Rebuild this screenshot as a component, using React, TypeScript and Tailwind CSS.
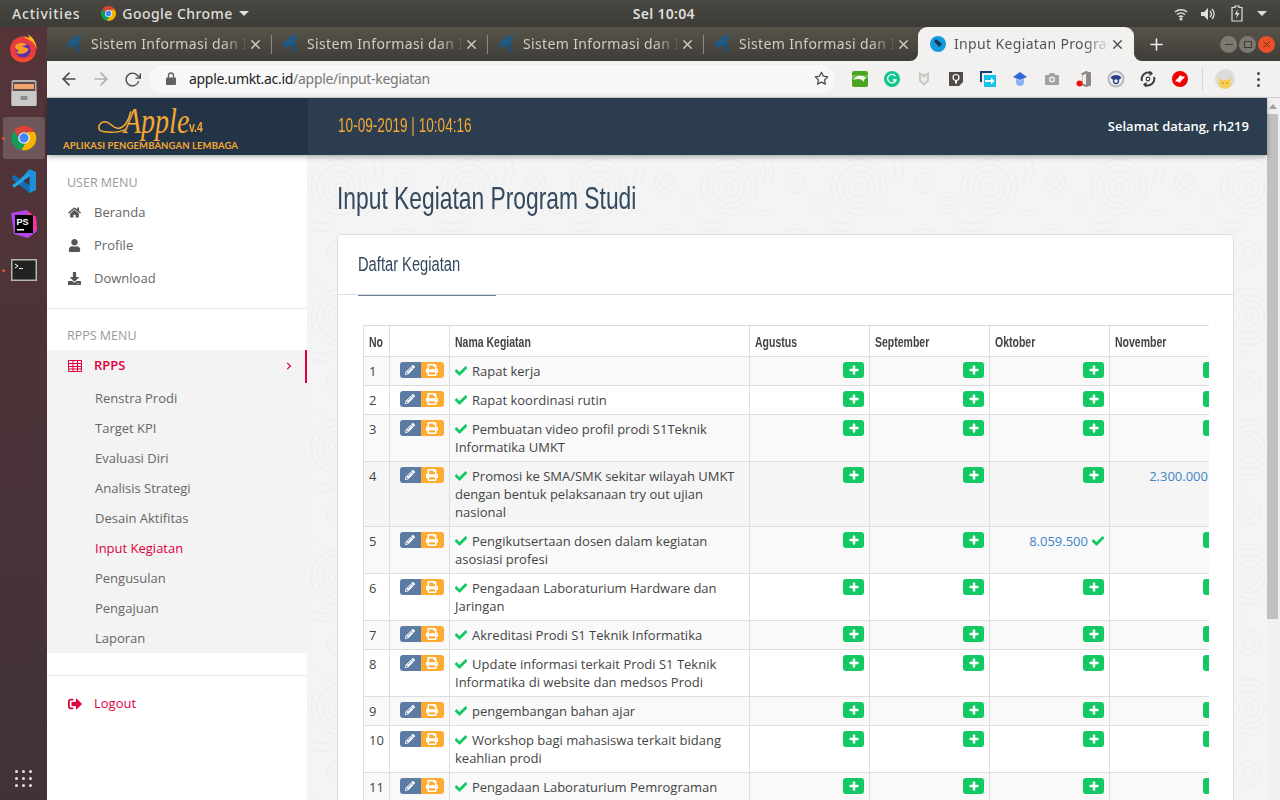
import {
  FaCheck,
  FaChevronRight,
  FaDownload,
  FaHome,
  FaPencilAlt,
  FaPlus,
  FaPrint,
  FaSignOutAlt,
  FaUser,
} from "react-icons/fa";
import { FiArrowLeft, FiArrowRight, FiRotateCw, FiStar, FiX, FiPlus } from "react-icons/fi";

const openSans = "font-['Open_Sans',sans-serif]";
const narrow = "inline-block origin-left whitespace-nowrap font-['Liberation_Sans',sans-serif]";

function ChromeLogo({ size = 24 }: { size?: number }) {
  return (
    <svg width={size} height={size} viewBox="0 0 48 48">
      <path d="M24 3a21 21 0 0 1 18.2 10.5H24a10.500 10.500 0 0 0-10 7.200L6.800 11.500A21 21 0 0 1 24 3z" fill="#db4437" />
      <path d="M6.800 11.500 15.900 27.300a10.500 10.500 0 0 0 10.700 6.900L19.700 44.600A21 21 0 0 1 6.800 11.500z" fill="#0f9d58" />
      <path d="M42.200 13.500A21 21 0 0 1 19.700 44.600l9-15.600a10.500 10.500 0 0 0-.200-15.500z" fill="#f4b400" />
      <circle cx="24" cy="24" r="10" fill="#fff" />
      <circle cx="24" cy="24" r="8" fill="#4285f4" />
    </svg>
  );
}

function CapIcon() {
  return (
    <svg width="18" height="18" viewBox="0 0 18 18" className="shrink-0">
      <path d="M0 10 9 1h7l-3 5v4l-4 2-2-2-4 3z" fill="#1e5a85" />
      <text x="8" y="17" fontSize="11" fontWeight="700" fill="#174e78" fontFamily="Liberation Sans, sans-serif">
        S
      </text>
    </svg>
  );
}

function Tab({ last }: { last?: boolean }) {
  return (
    <div className="relative flex h-full w-[216px] shrink-0 items-center pl-[10px] pr-[7px]">
      <CapIcon />
      <span className="ml-[7px] w-[157px] shrink-0 overflow-hidden whitespace-nowrap pb-[2px] text-[14px] tracking-[0.35px] text-[#cfcdc7] font-['Noto_Sans',sans-serif] [mask-image:linear-gradient(to_right,black_84%,transparent)]">
        Sistem Informasi dan I
      </span>
      <FiX className="ml-auto mr-[2px] text-[15px] text-[#d8d6d0]" />
      {!last && <span className="absolute right-0 top-[8px] h-[19px] w-px bg-[#8c8a83]" />}
    </div>
  );
}

function Extensions() {
  return (
    <div className="flex items-center">
      {/* dolphin */}
      <div className="flex w-8 justify-center">
        <svg width="16" height="16" viewBox="0 0 16 16">
          <rect width="16" height="16" rx="2" fill="#4aa321" />
          <path d="M0 4h16v3C11 3 5 3 0 8z" fill="#7cc04f" />
          <path d="M1 9c3-5 8-6 14-2-2 0-3 1-3 4-2-3-6-4-11-2z" fill="#eef8e6" />
        </svg>
      </div>
      {/* grammarly */}
      <div className="flex w-8 justify-center">
        <svg width="16" height="16" viewBox="0 0 16 16">
          <circle cx="8" cy="8" r="8" fill="#11c58f" />
          <path d="M11.500 5.200A4.300 4.300 0 1 0 12 9H8.800" fill="none" stroke="#fff" strokeWidth="1.300" />
        </svg>
      </div>
      {/* shield */}
      <div className="flex w-8 justify-center">
        <svg width="16" height="16" viewBox="0 0 16 16">
          <path d="M3 1 8 3.500 13 1v9l-5 5-5-5z" fill="#c9c9c6" />
          <path d="M5 4 8 7l3-3v5l-3 3-3-3z" fill="#eeedec" />
        </svg>
      </div>
      {/* bulb note */}
      <div className="flex w-8 justify-center">
        <svg width="16" height="16" viewBox="0 0 16 16">
          <path d="M1 1h14v10l-4 4H1z" fill="#4f4c4a" />
          <circle cx="8" cy="6.500" r="3" fill="none" stroke="#fff" strokeWidth="1.200" />
          <path d="M7 10h2v2.500H7z" fill="#fff" />
        </svg>
      </div>
      {/* share */}
      <div className="flex w-8 justify-center">
        <svg width="16" height="16" viewBox="0 0 16 16">
          <path d="M0 0h12v2H2v9H0z" fill="#123f6b" />
          <rect x="4" y="4" width="12" height="12" fill="#12c4ea" />
          <path d="M5 9h6V6.500l3.500 3.500-3.500 3.500V11H5z" fill="#fff" />
        </svg>
      </div>
      {/* cap */}
      <div className="flex w-8 justify-center">
        <svg width="16" height="16" viewBox="0 0 16 16">
          <path d="M8 1 15 6 8 9 1 6z" fill="#3468d6" />
          <path d="M4 8l4 1.500L12 8v3a4 4 0 0 1-8 0z" fill="#8ab0f3" />
        </svg>
      </div>
      {/* camera */}
      <div className="flex w-8 justify-center">
        <svg width="16" height="16" viewBox="0 0 16 16">
          <path d="M1 4h3.500L6 2h4l1.500 2H15v10H1z" fill="#a3a19f" />
          <circle cx="8" cy="8.500" r="3" fill="#f2f1f0" />
          <circle cx="8" cy="8.500" r="1.600" fill="#a3a19f" />
        </svg>
      </div>
      {/* office */}
      <div className="flex w-8 justify-center">
        <svg width="16" height="16" viewBox="0 0 16 16">
          <path d="M4 3 10 0l5 1.500v13L10 16l-4-1.500V3z" fill="#8b8886" />
          <path d="M6.500 4.500 10 2.500v11l-3.500-.5z" fill="#f2f1f0" />
          <circle cx="3.500" cy="12.500" r="3" fill="#ee0f0f" />
        </svg>
      </div>
      {/* phone */}
      <div className="flex w-8 justify-center">
        <svg width="18" height="18" viewBox="0 0 18 18">
          <circle cx="9" cy="9" r="8.500" fill="#b7b7bc" />
          <circle cx="9" cy="9" r="6.500" fill="#f0f0f4" />
          <path d="M3.500 8C5 4 13 4 14.500 8l-2 1.500H11V8H7v1.500H5.500z" fill="#2b3f86" />
          <circle cx="9" cy="11" r="2.500" fill="none" stroke="#2b3f86" strokeWidth="1.300" />
        </svg>
      </div>
      {/* sync */}
      <div className="flex w-8 justify-center">
        <svg width="16" height="16" viewBox="0 0 16 16" fill="none" stroke="#3b3b3b" strokeWidth="2">
          <path d="M2 10A6.500 6.500 0 0 1 11 2.200" />
          <path d="M14 6A6.500 6.500 0 0 1 5 13.800" />
          <path d="M9.500 0l3 2.500-3 2" fill="#3b3b3b" strokeWidth="1" />
          <path d="M6.500 16l-3-2.500 3-2" fill="#3b3b3b" strokeWidth="1" />
          <circle cx="8" cy="8" r="1.800" strokeWidth="1.200" />
        </svg>
      </div>
      {/* red sync */}
      <div className="flex w-8 justify-center">
        <svg width="16" height="16" viewBox="0 0 16 16">
          <circle cx="8" cy="8" r="8" fill="#ee0000" />
          <path d="M4 9.500 8.500 4 10 5.500 6 10.500zM12 6.500 7.500 12 6 10.500l4-5z" fill="#fff" />
          <path d="M3.500 11 4 8l2.500 2zM12.500 5 12 8 9.500 6z" fill="#fff" />
        </svg>
      </div>
      <span className="ml-[6px] h-[24px] w-px bg-[#d6d5d3]" />
      <div className="ml-[12px] flex h-[20px] w-[20px] items-end justify-center overflow-hidden rounded-full bg-[#dcdcdc]">
        <svg width="14" height="14" viewBox="0 0 14 14">
          <path d="M1 2l3 3h6l3-3v7a6 5 0 0 1-12 0z" fill="#f6cd55" />
          <circle cx="5" cy="8" r="0.700" fill="#a07a20" />
          <circle cx="9" cy="8" r="0.700" fill="#a07a20" />
        </svg>
      </div>
      <div className="ml-[22px] flex flex-col gap-[3px]">
        <span className="h-[3px] w-[3px] rounded-full bg-[#4a4a4a]" />
        <span className="h-[3px] w-[3px] rounded-full bg-[#4a4a4a]" />
        <span className="h-[3px] w-[3px] rounded-full bg-[#4a4a4a]" />
      </div>
    </div>
  );
}

function Dock() {
  return (
    <div className="flex h-full w-[47px] shrink-0 flex-col items-center bg-gradient-to-b from-[#553438] to-[#403238]">
      {/* firefox */}
      <div className="flex h-[42px] items-center justify-center pr-px">
        <svg width="28" height="29" viewBox="0 0 28 29">
          <circle cx="14" cy="15.500" r="13" fill="#e83a3f" />
          <path d="M18 0c6 3 10 9 9.500 16-.5-5-3-9-7-10.500C21 3.500 20 1.500 18 0z" fill="#ffcb2e" />
          <path d="M14 2.500a13 13 0 0 1 13.500 13c-1-5-4-8-7.500-9.500z" fill="#ffa51f" />
          <circle cx="14" cy="16" r="7.500" fill="#5a2fa8" />
          <path d="M6 12c3-4 10-4 12-1-2 0-3 1-5 1.500 2 1 6 1 6.500 3-2 5-10 6-13.500 1.500 1 .500 3 1 4 0-2-1-4-3-4-5z" fill="#fd9a26" />
          <path d="M2 20c3 7 13 10 20 5 3-2 4-5 5-8-2 6-8 8-13 8-5 0-9-2-12-5z" fill="#f8542a" />
        </svg>
      </div>
      {/* files */}
      <div className="flex h-[48px] items-center justify-center">
        <svg width="26" height="28" viewBox="0 0 26 28">
          <rect x="0.500" y="1" width="25" height="26" rx="2" fill="#b4b4b2" />
          <rect x="2" y="3" width="22" height="9" fill="#5e4a42" />
          <rect x="3" y="5" width="20" height="5" fill="#f0a36b" />
          <rect x="0.500" y="12" width="25" height="15" rx="1" fill="#c9c9c7" />
          <rect x="9.500" y="17" width="7" height="4" rx="1" fill="#8b8b89" />
        </svg>
      </div>
      {/* chrome, active */}
      <div className="relative flex h-[42px] w-[42px] items-center justify-center rounded-[3px] bg-[#6e575a]">
        <span className="absolute left-[-1px] top-[20px] h-[3px] w-[3px] rounded-full bg-[#e95420]" />
        <ChromeLogo size={28} />
      </div>
      {/* vs code */}
      <div className="mt-px flex h-[42px] items-center justify-center">
        <svg width="26" height="26" viewBox="0 0 26 26">
          <path d="M18.500 1 25 4v18l-6.500 3L6.500 14z" fill="#1d8fd6" />
          <path d="M1 8.500 3.500 7l15 11v7L1 11z" fill="#0f6fb0" />
          <path d="M1 17.500l17.500-13v4.500L3.500 19.500z" fill="#2aa3ea" />
          <path d="M18.500 8.500v9L12 13z" fill="#403238" />
        </svg>
      </div>
      {/* phpstorm */}
      <div className="mt-px flex h-[42px] items-center justify-center">
        <svg width="29" height="29" viewBox="0 0 29 29">
          <path d="M2 3 17 0l10 7 1 14-9 7-14-4z" fill="#b345f1" />
          <path d="M17 0l10 7 1 14-5-1z" fill="#ff318c" opacity="0.800" />
          <rect x="6" y="5" width="18" height="18" fill="#000" />
          <text x="7.500" y="14.500" fontSize="9" fontWeight="700" fill="#fff" fontFamily="Liberation Sans, sans-serif">
            PS
          </text>
          <rect x="8" y="19" width="7" height="1.500" fill="#fff" />
        </svg>
      </div>
      {/* terminal */}
      <div className="relative mt-[4px] flex h-[42px] w-full items-center justify-center">
        <span className="absolute left-[2px] top-[20px] h-[3px] w-[3px] rounded-full bg-[#e95420]" />
        <svg width="26" height="22" viewBox="0 0 26 22">
          <rect width="26" height="22" fill="#b5b5b3" />
          <rect x="1.500" y="1.500" width="23" height="19" fill="#222" />
          <path d="M4 5l3 2-3 2" fill="none" stroke="#fff" strokeWidth="1" />
          <rect x="8" y="9" width="4" height="1" fill="#fff" />
        </svg>
      </div>
      <div className="mb-[13px] mt-auto grid grid-cols-3 gap-x-[4px] gap-y-[4px] pr-px">
        {Array.from({ length: 9 }).map((_, i) => (
          <span key={i} className="h-[3px] w-[3px] rounded-full bg-[#e8e4e4]" />
        ))}
      </div>
    </div>
  );
}

const subMenu = ["Renstra Prodi", "Target KPI", "Evaluasi Diri", "Analisis Strategi", "Desain Aktifitas", "Input Kegiatan", "Pengusulan", "Pengajuan", "Laporan"];

function Sidebar() {
  return (
    <aside className={`h-full w-[260px] shrink-0 bg-white text-[13px] text-[#666] ${openSans}`}>
      <div className="border-b border-[#e8e8e8] pb-[13px] pt-[19px]">
        <div className="mb-[4px] h-[18px] pl-[20px] text-[12.500px] leading-[18px] text-[#999]">USER MENU</div>
        {[
          { label: "Beranda", Icon: FaHome },
          { label: "Profile", Icon: FaUser },
          { label: "Download", Icon: FaDownload },
        ].map(({ label, Icon }) => (
          <div key={label} className="flex h-[33px] items-center pl-[21px]">
            <span className="flex w-[26px] text-[13px] text-[#555]">
              <Icon />
            </span>
            {label}
          </div>
        ))}
      </div>
      <div className="border-b border-[#e8e8e8] pb-[22px] pt-[18px]">
        <div className="mb-[5px] h-[18px] pl-[20px] text-[12.500px] leading-[18px] text-[#999]">RPPS MENU</div>
        <div className="flex h-[33px] items-center border-r-2 border-[#e0003c] bg-[#f3f3f3] pb-[2px] pl-[21px] font-semibold text-[#e0003c]">
          <svg width="14" height="12" viewBox="0 0 14 12" fill="none" stroke="#e0003c" className="mr-[12px]">
            <path d="M.5.500h13v11H.5zM.5 3.500h13M.5 6.500h13M.5 9h13M5 .500v11M9.500 .500v11" />
          </svg>
          RPPS
          <FaChevronRight className="ml-auto mr-[12px] text-[8px]" />
        </div>
        <div className="bg-[#f3f3f3]">
          {subMenu.map((item) => (
            <div key={item} className={`flex h-[30px] items-center pl-[48px] pt-[2px] ${item === "Input Kegiatan" ? "text-[#e0003c]" : ""}`}>
              {item}
            </div>
          ))}
        </div>
      </div>
      <div className="mt-[11px] flex h-[33px] items-center pl-[21px] text-[#e0003c]">
        <span className="flex w-[26px] text-[14px]">
          <FaSignOutAlt />
        </span>
        Logout
      </div>
    </aside>
  );
}

type Row = {
  no: number;
  name: string;
  values?: Record<number, { text: string }>;
};

const rows: Row[] = [
  { no: 1, name: "Rapat kerja" },
  { no: 2, name: "Rapat koordinasi rutin" },
  { no: 3, name: "Pembuatan video profil prodi S1Teknik Informatika UMKT" },
  { no: 4, name: "Promosi ke SMA/SMK sekitar wilayah UMKT dengan bentuk pelaksanaan try out ujian nasional", values: { 3: { text: "2.300.000" } } },
  { no: 5, name: "Pengikutsertaan dosen dalam kegiatan asosiasi profesi", values: { 2: { text: "8.059.500" } } },
  { no: 6, name: "Pengadaan Laboraturium Hardware dan Jaringan" },
  { no: 7, name: "Akreditasi Prodi S1 Teknik Informatika" },
  { no: 8, name: "Update informasi terkait Prodi S1 Teknik Informatika di website dan medsos Prodi" },
  { no: 9, name: "pengembangan bahan ajar" },
  { no: 10, name: "Workshop bagi mahasiswa terkait bidang keahlian prodi" },
  { no: 11, name: "Pengadaan Laboraturium Pemrograman" },
];

const months = ["Agustus", "September", "Oktober", "November"];

function HeadLabel({ children }: { children: string }) {
  return <span className={`${narrow} scale-x-[0.7]`}>{children}</span>;
}

function KegiatanTable() {
  const th = "h-[31px] border border-[#ddd] px-[5px] py-0 text-left text-[15px] font-bold leading-[19px] text-[#444]";
  const td = "border border-[#ddd] px-[5px] py-[5px] align-top";
  return (
    <div className="w-[846px] overflow-hidden">
      <table className={`w-[866px] table-fixed border-collapse text-[13px] leading-[18px] text-[#444] ${openSans}`}>
        <colgroup>
          <col className="w-[26px]" />
          <col className="w-[60px]" />
          <col className="w-[300px]" />
          <col className="w-[120px]" />
          <col className="w-[120px]" />
          <col className="w-[120px]" />
          <col className="w-[120px]" />
        </colgroup>
        <thead>
          <tr>
            <th className={th}>
              <HeadLabel>No</HeadLabel>
            </th>
            <th className={th}></th>
            <th className={th}>
              <HeadLabel>Nama Kegiatan</HeadLabel>
            </th>
            {months.map((m) => (
              <th key={m} className={th}>
                <HeadLabel>{m}</HeadLabel>
              </th>
            ))}
          </tr>
        </thead>
        <tbody>
          {rows.map((row) => (
            <tr key={row.no} className={row.no === 4 ? "bg-[#f5f5f5]" : row.no % 2 === 1 ? "bg-[#f9f9f9]" : "bg-white"}>
              <td className={td}>{row.no}</td>
              <td className={td}>
                <div className="flex justify-center pl-[4px]">
                  <span className="flex h-[16px] w-[21px] shrink-0 items-center justify-center rounded-l-[3px] bg-[#5b7ba5] text-[10px] text-white">
                    <FaPencilAlt />
                  </span>
                  <span className="flex h-[16px] w-[23px] shrink-0 items-center justify-center rounded-r-[3px] bg-[#fdab32] text-[12px] text-white">
                    <FaPrint />
                  </span>
                </div>
              </td>
              <td className={td}>
                <FaCheck className="mr-[5px] inline-block stroke-[30px] align-[-1px] text-[12px] text-[#13c964]" />
                {row.name}
              </td>
              {months.map((m, i) => {
                const value = row.values?.[i];
                return (
                  <td key={m} className={`${td} text-right`}>
                    {value ? (
                      <span className="flex items-center justify-end gap-[4px] whitespace-nowrap text-[#3f83c9]">
                        {value.text}
                        <FaCheck className="stroke-[30px] text-[12px] text-[#13c964]" />
                      </span>
                    ) : (
                      <span className="ml-auto flex h-[16px] w-[21px] items-center justify-center rounded-[3px] bg-[#13c964] text-[10px] text-white">
                        <FaPlus className="stroke-[30px]" />
                      </span>
                    )}
                  </td>
                );
              })}
            </tr>
          ))}
        </tbody>
      </table>
    </div>
  );
}

export default function App() {
  return (
    <div className="flex h-[800px] w-[1280px] flex-col overflow-hidden bg-[#403238]">
      {/* gnome top bar */}
      <div className="flex h-[27px] shrink-0 items-center bg-gradient-to-b from-[#4a4842] to-[#3c3b37] text-[14px] font-medium text-[#dfdfda] font-['Noto_Sans',sans-serif]">
        <span className="ml-[12px] tracking-[0.8px]">Activities</span>
        <span className="ml-[20px] flex">
          <ChromeLogo size={17} />
        </span>
        <span className="ml-[5px] tracking-[0.45px]">Google Chrome</span>
        <span className="ml-[6px] h-0 w-0 border-x-[5px] border-t-[5px] border-x-transparent border-t-[#dfdfda]" />
        <span className="ml-[384px] text-[14px] font-semibold tracking-[0.3px]">Sel 10:04</span>
        <div className="ml-auto mr-[13px] flex items-center gap-[13px]">
          <svg width="14" height="14" viewBox="0 0 14 14" fill="none" stroke="#dfdfda" strokeWidth="1.500">
            <path d="M1 5a9 9 0 0 1 12 0M3 7.500a6 6 0 0 1 8 0M5 10a3 3 0 0 1 4 0" />
            <circle cx="7" cy="12" r="0.800" fill="#dfdfda" />
          </svg>
          <svg width="15" height="14" viewBox="0 0 15 14" fill="#dfdfda">
            <path d="M0 5h3l4-4v12L3 9H0z" />
            <path d="M9 4a4 4 0 0 1 0 6M11 2a7 7 0 0 1 0 10" fill="none" stroke="#dfdfda" strokeWidth="1.300" />
          </svg>
          <svg width="12" height="17" viewBox="0 0 12 17" fill="none" stroke="#dfdfda" strokeWidth="1.200" className="ml-[2px]">
            <path d="M4 1h4v1.500h3V16H1V2.500h3z" />
            <path d="M7 4 3.500 9.500H6L5 14l3.500-6H6z" fill="#dfdfda" stroke="none" />
          </svg>
          <span className="ml-px h-0 w-0 border-x-[5px] border-t-[5px] border-x-transparent border-t-[#dfdfda]" />
        </div>
      </div>

      <div className="flex min-h-0 flex-1">
        <Dock />
        <div className="flex min-w-0 flex-1 flex-col">
          {/* tab strip */}
          <div className="flex h-[34px] shrink-0 items-end bg-gradient-to-b from-[#565449] to-[#3f3d38] pl-[9px]">
            <div className="flex h-[34px] items-center">
              <Tab />
              <Tab />
              <Tab />
              <Tab last />
            </div>
            <div className="relative -ml-[2px] flex h-[34px] w-[216px] shrink-0 items-center rounded-t-[9px] bg-[#f2f1f0] pl-[12px] pr-[7px]">
              <span className="absolute bottom-0 left-[-8px] h-[8px] w-[8px] bg-[#f2f1f0]">
                <span className="block h-full w-full rounded-br-[8px] bg-[#403e39]" />
              </span>
              <span className="absolute bottom-0 right-[-8px] h-[8px] w-[8px] bg-[#f2f1f0]">
                <span className="block h-full w-full rounded-bl-[8px] bg-[#403e39]" />
              </span>
              <svg width="16" height="16" viewBox="0 0 16 16" className="shrink-0">
                <circle cx="8" cy="8" r="8" fill="#149bde" />
                <path d="M4 5.500 6 3l6 5-2.500 3z" fill="#16344a" />
              </svg>
              <span className="ml-[8px] w-[156px] shrink-0 overflow-hidden whitespace-nowrap pb-[2px] text-[14px] tracking-[0.35px] text-[#555] font-['Noto_Sans',sans-serif] [mask-image:linear-gradient(to_right,black_84%,transparent)]">
                Input Kegiatan Progra
              </span>
              <FiX className="ml-auto mr-[2px] text-[15px] text-[#444]" />
            </div>
            <div className="flex h-[34px] w-[44px] items-center justify-center text-[19px] text-[#efeeec]">
              <FiPlus />
            </div>
            <div className="ml-auto mr-[5px] flex h-[34px] items-center gap-[2px]">
              <span className="flex h-[17px] w-[17px] items-center justify-center rounded-full bg-[#7b7972] text-[#3d3b36]">
                <span className="h-px w-[8px] bg-[#3d3b36]" />
              </span>
              <span className="flex h-[17px] w-[17px] items-center justify-center rounded-full bg-[#7b7972]">
                <span className="h-[7px] w-[8px] border border-[#3d3b36]" />
              </span>
              <span className="flex h-[17px] w-[17px] items-center justify-center rounded-full bg-[#e8502a] text-[11px] text-[#7a2a10]">
                <FiX />
              </span>
            </div>
          </div>

          {/* toolbar */}
          <div className="flex h-[37px] shrink-0 items-center border-b border-[#cfcecc] bg-[#f2f1f0] pl-[12px] pr-[20px]">
            <FiArrowLeft className="text-[20px] text-[#4a4a4a]" />
            <FiArrowRight className="ml-[12px] text-[20px] text-[#b0b0b0]" />
            <FiRotateCw className="ml-[13px] text-[17px] text-[#4a4a4a]" />
            <div className="ml-[8px] flex h-[28px] w-[686px] items-center rounded-full bg-[#f8f8f8] pb-[2px] pl-[17px] pr-[6px] text-[14px] tracking-[-0.3px] font-['Noto_Sans',sans-serif]">
              <svg width="10" height="13" viewBox="0 0 10 13" className="shrink-0">
                <path d="M2.500 6V3.500a2.500 2.500 0 0 1 5 0V6" fill="none" stroke="#5f6368" strokeWidth="1.300" />
                <rect y="5.500" width="10" height="7.500" rx="1" fill="#5f6368" />
              </svg>
              <span className="ml-[13px] text-[#222]">apple.umkt.ac.id</span>
              <span className="text-[#777]">/apple/input-kegiatan</span>
              <FiStar className="ml-auto text-[15px] text-[#4a4a4a]" />
            </div>
            <div className="ml-auto">
              <Extensions />
            </div>
          </div>

          {/* page */}
          <div className="flex min-h-0 flex-1">
            <div className="flex min-w-0 flex-1 flex-col">
              <header className="relative z-20 flex h-[57px] shrink-0 items-center bg-[#2b3d4f] shadow-[0_2px_5px_rgba(0,0,0,0.3)]">
                <div className="flex h-full w-[261px] shrink-0 flex-col bg-[#233446] pl-[16px] text-[#f5a833]">
                  <div className="flex h-[41px] items-end pl-[35px]">
                    <svg width="34" height="28" viewBox="0 0 32 26" fill="none" stroke="#f5a833" strokeWidth="1.500" className="mb-[2px] shrink-0">
                      <path d="M26 19C18 23 5 22 2 20c-3-3 0-9 6-8 5 1 6 7 12 6 5-1 9-8 11-16" />
                    </svg>
                    <span className={`${narrow} -ml-[8px] w-[59px] translate-y-[3px] scale-x-[0.8] font-['Liberation_Serif',serif] text-[35px] italic leading-[40px]`}>Apple</span>
                    <span className={`${narrow} mb-[5px] ml-[6px] scale-x-[0.75] text-[14px] font-bold leading-none`}>v.4</span>
                  </div>
                  <span className="mt-[1px] whitespace-nowrap text-[9.500px] font-bold leading-[12px] tracking-[0.1px] font-['Lato',sans-serif]">APLIKASI PENGEMBANGAN LEMBAGA</span>
                </div>
                <span className={`${narrow} ml-[30px] -mt-[3px] scale-x-[0.68] text-[20px] text-[#f5a833]`}>10-09-2019 | 10:04:16</span>
                <span className={`ml-auto mr-[18px] text-[13px] font-semibold text-white ${openSans}`}>Selamat datang, rh219</span>
              </header>

              <div className="flex min-h-0 flex-1">
                <Sidebar />
                <main className="relative min-w-0 flex-1 overflow-hidden bg-[#f4f4f4] pl-[30px] pr-[33px]">
                  <svg className="absolute inset-0 h-full w-full" aria-hidden="true">
                    <defs>
                      <pattern id="batik" width="130" height="130" patternUnits="userSpaceOnUse">
                        <g fill="none" stroke="#ececec" strokeWidth="1">
                          <circle cx="32" cy="32" r="28" />
                          <circle cx="32" cy="32" r="22" />
                          <circle cx="32" cy="32" r="16" />
                          <circle cx="32" cy="32" r="10" />
                          <circle cx="32" cy="32" r="4" />
                          <circle cx="98" cy="98" r="24" />
                          <circle cx="98" cy="98" r="17" />
                          <circle cx="98" cy="98" r="10" />
                          <circle cx="98" cy="98" r="4" />
                          <circle cx="98" cy="28" r="10" />
                          <circle cx="98" cy="28" r="5" />
                          <circle cx="32" cy="98" r="12" />
                          <circle cx="32" cy="98" r="6" />
                          <path d="M64 0c6 10 6 20 0 30M72 0c6 10 6 20 0 30M116 0c4 8 10 12 14 14M0 64c10 6 20 6 30 0M0 72c10 6 20 6 30 0M58 60c6-6 14-6 20-2M50 120c4 6 8 8 14 10M2 118c4 6 10 10 16 12" />
                          <path d="M112 40c6 4 12 4 18 0M112 48c6 4 12 4 18 0M112 56c6 4 12 4 18 0M56 84c4 6 4 14 0 20M62 84c4 6 4 14 0 20" />
                        </g>
                      </pattern>
                    </defs>
                    <rect width="100%" height="100%" fill="url(#batik)" />
                  </svg>
                  <div className="relative">
                    <h1 className="flex h-[79px] items-center pt-[6px] text-[#34495e]">
                      <span className={`${narrow} scale-x-[0.713] text-[32px]`}>Input Kegiatan Program Studi</span>
                    </h1>
                    <div className="rounded-t-[4px] border border-[#ddd] bg-white">
                      <div className="relative flex h-[60px] items-center border-b border-[#ddd] pb-[2px] pl-[20px]">
                        <h2 className="text-[#34495e]">
                          <span className={`${narrow} scale-x-[0.735] text-[20px]`}>Daftar Kegiatan</span>
                        </h2>
                        <span className="absolute bottom-[-2px] left-[20px] h-px w-[138px] bg-[#6b7f9f]" />
                      </div>
                      <div className="pl-[25px] pt-[30px]">
                        <KegiatanTable />
                      </div>
                    </div>
                  </div>
                </main>
              </div>
            </div>

            {/* scrollbar */}
            <div className="flex w-[13px] shrink-0 flex-col bg-[#f1f1f1]">
              <div className="flex h-[16px] items-center justify-center pr-[2px]">
                <span className="h-0 w-0 border-x-[4px] border-b-[5px] border-x-transparent border-b-[#a3a3a3]" />
              </div>
              <div className="h-[505px] w-[11px] bg-[#c1c1c1]" />
            </div>
          </div>
        </div>
      </div>
    </div>
  );
}
